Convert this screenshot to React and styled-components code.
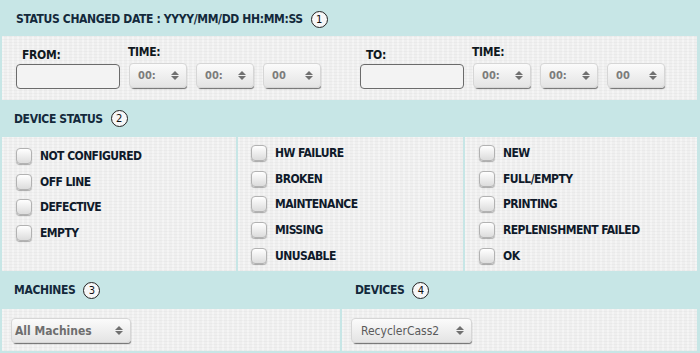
import React from "react";
import styled, { createGlobalStyle } from "styled-components";

const GlobalStyle = createGlobalStyle`
  body {
    margin: 0;
    background: #ffffff;
    font-family: "DejaVu Sans Condensed", "DejaVu Sans", sans-serif;
  }
`;

const Panel = styled.div`
  width: 700px;
  background: #c7e6e6;
  padding: 0 3px 2px 2px;
  box-sizing: border-box;
`;

const Header = styled.div`
  height: ${(p) => p.h}px;
  display: grid;
  grid-template-columns: ${(p) => p.cols || "1fr"};
  column-gap: 2px;
  align-items: center;
`;

const Title = styled.div`
  display: flex;
  align-items: center;
  padding-left: ${(p) => p.pad || 12}px;
  padding-top: ${(p) => p.top || 0}px;
  font-weight: bold;
  font-size: 12px;
  color: #13293b;
  letter-spacing: -0.35px;
`;

const Badge = styled.span`
  display: inline-flex;
  align-items: center;
  justify-content: center;
  width: 15px;
  height: 15px;
  margin-left: 8px;
  border: 1px solid #222;
  border-radius: 50%;
  background: #f7f7f7;
  font-family: "DejaVu Sans", sans-serif;
  font-weight: normal;
  font-size: 10px;
  letter-spacing: 0;
  color: #111;
`;

const Body = styled.div`
  display: grid;
  grid-template-columns: ${(p) => p.cols || "1fr"};
  column-gap: 2px;
  height: ${(p) => p.h}px;
`;

const Cell = styled.div`
  background-color: #efefef;
  background-image: repeating-linear-gradient(
      0deg,
      rgba(0, 0, 0, 0.025) 0 1px,
      transparent 1px 3px
    ),
    repeating-linear-gradient(
      90deg,
      rgba(255, 255, 255, 0.35) 0 2px,
      transparent 2px 5px
    );
  box-sizing: border-box;
`;

const DateGrid = styled.div`
  display: grid;
  grid-template-columns: 344px 1fr;
  padding: 9px 0 0 14px;
`;

const Range = styled.div`
  display: flex;
  align-items: flex-start;
`;

const Field = styled.div`
  display: flex;
  flex-direction: column;
  margin-right: ${(p) => p.gap || 0}px;
`;

const Label = styled.div`
  font-weight: bold;
  font-size: 12px;
  line-height: 14px;
  letter-spacing: -0.3px;
  color: #101820;
  margin: ${(p) => (p.low ? "3px 0 2px 6px" : "0 0 4px 0")};
`;

const DateInput = styled.div`
  width: 104px;
  height: 25px;
  box-sizing: border-box;
  border: 1px solid #6b6b6b;
  border-radius: 4px;
  background: #f3f3f3;
`;

const Times = styled.div`
  display: flex;
  gap: 9px;
  margin-left: 1px;
`;

const Select = styled.div`
  width: ${(p) => p.w}px;
  height: 25px;
  box-sizing: border-box;
  display: flex;
  align-items: center;
  justify-content: space-between;
  padding: 0 7px 0 ${(p) => p.padl || 8}px;
  border: 1px solid #d6d6d6;
  border-radius: 4px;
  background: linear-gradient(#fbfbfb, #e4e4e4);
  box-shadow: 1px 2px 1px -1px rgba(0, 0, 0, 0.55);
  font-size: ${(p) => p.fs || 11}px;
  font-weight: ${(p) => (p.bold ? "bold" : "normal")};
  color: ${(p) => p.color || "#7c7c7c"};
`;

const Arrows = styled.span`
  display: flex;
  flex-direction: column;
  gap: 1px;
  &::before,
  &::after {
    content: "";
    width: 0;
    height: 0;
    border-left: 4px solid transparent;
    border-right: 4px solid transparent;
  }
  &::before {
    border-bottom: 4px solid #707070;
  }
  &::after {
    border-top: 4px solid #707070;
  }
`;

const List = styled.div`
  display: grid;
  grid-auto-rows: 25.8px;
  padding: ${(p) => p.top}px 0 0 ${(p) => p.left}px;
`;

const Check = styled.label`
  display: flex;
  align-items: center;
  gap: 8px;
  font-weight: bold;
  font-size: 12px;
  color: #0f1a2a;
  letter-spacing: -0.55px;
`;

const Box = styled.span`
  width: 16px;
  height: 16px;
  box-sizing: border-box;
  border: 1px solid #b2b2b2;
  border-radius: 4px;
  background: linear-gradient(#ffffff, #dcdcdc);
  box-shadow: 0 1px 1px rgba(0, 0, 0, 0.3);
`;

const SelectCell = styled(Cell)`
  padding: 9px 0 0 ${(p) => p.left}px;
`;

const columns = [
  { top: 6, left: 14, items: ["NOT CONFIGURED", "OFF LINE", "DEFECTIVE", "EMPTY"] },
  { top: 3, left: 13, items: ["HW FAILURE", "BROKEN", "MAINTENANCE", "MISSING", "UNUSABLE"] },
  { top: 3, left: 14, items: ["NEW", "FULL/EMPTY", "PRINTING", "REPLENISHMENT FAILED", "OK"] },
];

function TimeSelects() {
  return (
    <Times>
      {["00:", "00:", "00"].map((v, i) => (
        <Select key={i} w={58} bold>
          {v}
          <Arrows />
        </Select>
      ))}
    </Times>
  );
}

function DateRange({ label }) {
  return (
    <Range>
      <Field gap={8}>
        <Label low>{label}</Label>
        <DateInput />
      </Field>
      <Field>
        <Label>TIME:</Label>
        <TimeSelects />
      </Field>
    </Range>
  );
}

export default function App() {
  return (
    <>
      <GlobalStyle />
      <Panel>
        <Header h={36}>
          <Title pad={14} top={2}>
            STATUS CHANGED DATE : YYYY/MM/DD HH:MM:SS <Badge>1</Badge>
          </Title>
        </Header>
        <Body h={64}>
          <Cell>
            <DateGrid>
              <DateRange label="FROM:" />
              <DateRange label="TO:" />
            </DateGrid>
          </Cell>
        </Body>

        <Header h={37}>
          <Title>
            DEVICE STATUS <Badge>2</Badge>
          </Title>
        </Header>
        <Body h={134} cols="234px 225px 1fr">
          {columns.map((col, i) => (
            <Cell key={i}>
              <List top={col.top} left={col.left}>
                {col.items.map((t) => (
                  <Check key={t}>
                    <Box />
                    {t}
                  </Check>
                ))}
              </List>
            </Cell>
          ))}
        </Body>

        <Header h={38} cols="338px 1fr">
          <Title>
            MACHINES <Badge>3</Badge>
          </Title>
          <Title pad={13}>
            DEVICES <Badge>4</Badge>
          </Title>
        </Header>
        <Body h={42} cols="338px 1fr">
          <SelectCell left={9}>
            <Select w={120} padl={3} fs={12} bold color="#6e6e6e">
              All Machines
              <Arrows />
            </Select>
          </SelectCell>
          <SelectCell left={9}>
            <Select w={121} padl={9} fs={12} color="#5a5a5a">
              RecyclerCass2
              <Arrows />
            </Select>
          </SelectCell>
        </Body>
      </Panel>
    </>
  );
}
